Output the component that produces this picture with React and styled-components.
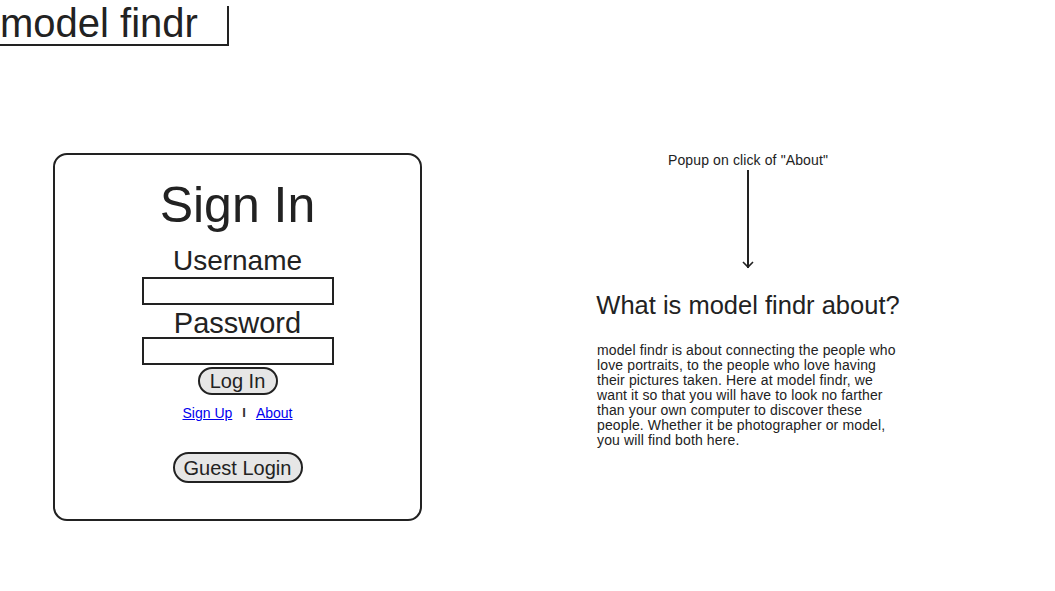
import React from "react";
import styled, { createGlobalStyle } from "styled-components";

const GlobalStyle = createGlobalStyle`
  body {
    margin: 0;
    background: #ffffff;
    color: #222222;
    font-family: "Liberation Sans", Arial, sans-serif;
  }
`;

const ABOUT_TEXT =
  "model findr is about connecting the people who love portraits, to the people who love having their pictures taken. Here at model findr, we want it so that you will have to look no farther than your own computer to discover these people. Whether it be photographer or model, you will find both here.";

const App = () => {
  return (
    <>
      <GlobalStyle />
      <Header>
        <Logo>model findr</Logo>
        <Cursor />
      </Header>
      <Main>
        <Card>
          <Title>Sign In</Title>
          <Label htmlFor="username" top={14} size={28}>
            Username
          </Label>
          <Input id="username" type="text" top={2} />
          <Label htmlFor="password" top={4} size={29}>
            Password
          </Label>
          <Input id="password" type="password" top={0} />
          <PillButton top={2} height={28} width={80}>
            Log In
          </PillButton>
          <Links>
            <LinkText href="#">Sign Up</LinkText>
            <Separator>I</Separator>
            <LinkText href="#">About</LinkText>
          </Links>
          <PillButton top={31} height={31} width={130}>
            Guest Login
          </PillButton>
        </Card>
        <AboutColumn>
          <Note>Popup on click of "About"</Note>
          <svg width="14" height="100" viewBox="0 0 14 100">
            <line x1="7" y1="1" x2="7" y2="99" stroke="#222" strokeWidth="2" />
            <polyline
              points="2,93 7,98 12,93"
              fill="none"
              stroke="#222"
              strokeWidth="1.6"
            />
          </svg>
          <AboutTitle>What is model findr about?</AboutTitle>
          <AboutText>{ABOUT_TEXT}</AboutText>
        </AboutColumn>
      </Main>
    </>
  );
};

export default App;

const Header = styled.header`
  display: flex;
  height: 46px;
`;

const Logo = styled.div`
  width: 227px;
  height: 44px;
  border-bottom: 2px solid #222;
  font-size: 40px;
  line-height: 46px;
  white-space: nowrap;
  overflow: hidden;
`;

const Cursor = styled.div`
  width: 2px;
  margin-top: 6px;
  background: #222;
`;

const Main = styled.main`
  display: flex;
  align-items: flex-start;
  padding: 106px 0 0 53px;
`;

const Card = styled.section`
  box-sizing: border-box;
  width: 369px;
  height: 368px;
  margin-top: 1px;
  padding-top: 22px;
  border: 2px solid #222;
  border-radius: 14px;
  display: flex;
  flex-direction: column;
  align-items: center;
`;

const Title = styled.h1`
  margin: 0;
  font-size: 50px;
  font-weight: 400;
  line-height: 56px;
`;

const Label = styled.label`
  display: block;
  margin-top: ${(p) => p.top}px;
  font-size: ${(p) => p.size}px;
  line-height: 28px;
`;

const Input = styled.input`
  box-sizing: border-box;
  width: 192px;
  height: 28px;
  margin: ${(p) => p.top}px 0 0;
  border: 2px solid #222;
  border-radius: 0;
  background: #fff;
  padding: 0 4px;
  outline: none;
`;

const PillButton = styled.button`
  box-sizing: border-box;
  width: ${(p) => p.width}px;
  height: ${(p) => p.height}px;
  margin-top: ${(p) => p.top}px;
  padding: 0;
  border: 2px solid #222;
  border-radius: 16px;
  background: #e6e6e6;
  color: #222;
  font-family: "Liberation Sans", Arial, sans-serif;
  font-size: 20px;
  line-height: 1;
  cursor: pointer;
`;

const Links = styled.div`
  display: flex;
  align-items: center;
  gap: 10px;
  margin-top: 10px;
  font-size: 14px;
  line-height: 16px;
`;

const LinkText = styled.a`
  color: #0000ee;
  text-decoration: underline;
`;

const Separator = styled.span`
  font-size: 13px;
  font-weight: 700;
  color: #333;
`;

const AboutColumn = styled.section`
  width: 320px;
  margin-left: 166px;
  display: flex;
  flex-direction: column;
  align-items: center;
`;

const Note = styled.div`
  font-size: 14px;
  line-height: 16px;
  letter-spacing: 0.12px;
  margin-bottom: 1px;
`;

const AboutTitle = styled.h2`
  margin: 22px 0 0;
  font-size: 25.5px;
  font-weight: 400;
  line-height: 29px;
`;

const AboutText = styled.p`
  width: 302px;
  margin: 23px 0 0;
  font-size: 14px;
  line-height: 15px;
  letter-spacing: 0.13px;
`;
